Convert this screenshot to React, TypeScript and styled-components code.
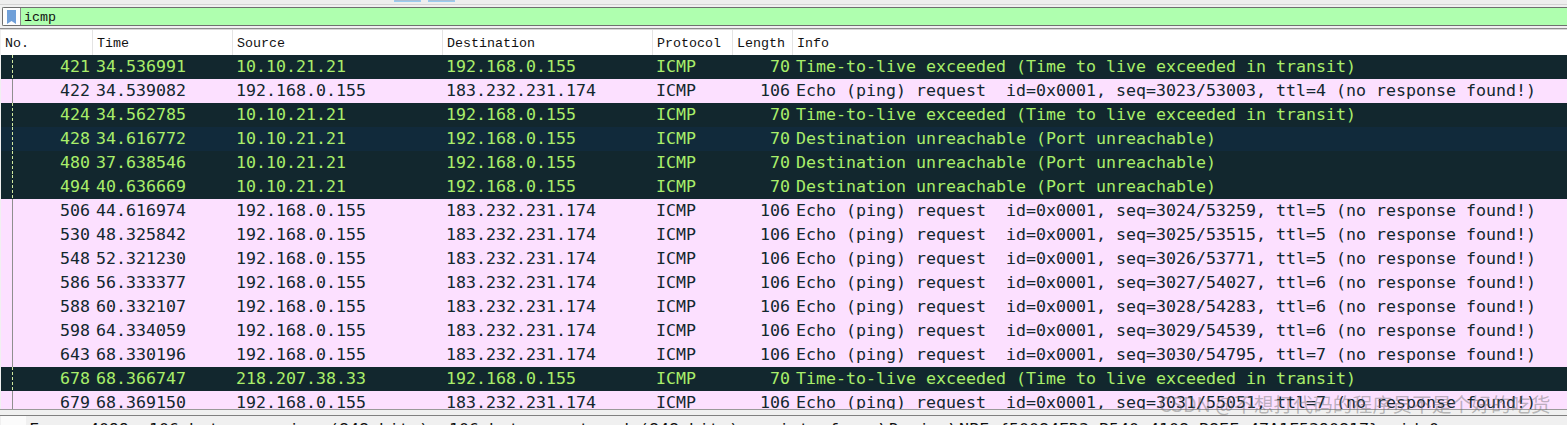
import React from "react";
import styled, { createGlobalStyle } from "styled-components";

const Global = createGlobalStyle`
  html, body { margin: 0; padding: 0; background: #f0f0f0; overflow: hidden; }
  #root { width: 1567px; height: 425px; overflow: hidden; }
`;

const mono = `"Liberation Mono", monospace`;
const rowFont = `"DejaVu Sans Mono", monospace`;
const grid = `93px 140px 210px 210px 80px 60px 1fr`;

const Page = styled.div`
  position: relative;
  width: 1567px;
  height: 425px;
  overflow: hidden;
  background: #f0f0f0;
  display: flex;
  flex-direction: column;
`;

const TopStrip = styled.div`
  height: 7px;
  box-sizing: border-box;
  padding-left: 394px;
  display: flex;
  align-items: flex-start;
  gap: 7px;
  background: linear-gradient(#eeeeee 0 4px, #d4d4d4 4px 5px, #f0f0f0 5px);
`;

const TabMark = styled.div`
  width: 27px;
  height: 2px;
  box-sizing: border-box;
  background: #a9bfd6;
  border: 1px solid #99ccf0;
  border-top: 0;
`;

const FilterBar = styled.div`
  height: 19px;
  margin-left: 2px;
  box-sizing: border-box;
  border: 1px solid #6f6f6f;
  border-right: 0;
  border-radius: 2px 0 0 2px;
  display: flex;
  background: #afffaf;
`;

const BookmarkBox = styled.div`
  width: 17px;
  background: #fdfdfd;
  border-right: 1px solid #8a8a8a;
  display: flex;
  align-items: center;
  justify-content: center;
`;

const FilterText = styled.div`
  font: 13.33px/19px ${mono};
  color: #111;
  padding-left: 3px;
`;

const Divider = styled.div`
  height: 2px;
  margin-top: 2px;
  background: linear-gradient(#8e8e8e 0 1px, #d8d8d8 1px);
  flex: none;
`;

const Table = styled.div`
  margin-left: 1px;
  height: 379px;
  flex: none;
  overflow: hidden;
  display: flex;
  flex-direction: column;
`;

const HeaderRow = styled.div`
  height: 25px;
  flex: none;
  margin-left: -1px;
  display: grid;
  grid-template-columns: ${grid};
  background: #ffffff;
`;

const HeaderCell = styled.div`
  font: 13.33px/28px ${mono};
  color: #111;
  height: 25px;
  padding-left: 4px;
  border-right: 1px solid #e4e4e4;
  box-sizing: border-box;
  &:first-child { padding-left: 5px; }
  &:last-child { border-right: 0; }
`;

const Row = styled.div<{ $kind: "err" | "sel" | "ok" }>`
  position: relative;
  height: 24px;
  flex: none;
  margin-left: -1px;
  padding-left: 1px;
  display: grid;
  grid-template-columns: 92px 140px 210px 210px 80px 60px 1fr;
  font: 16.62px/24px ${rowFont};
  white-space: pre;
  background: ${(p) => (p.$kind === "ok" ? "#fce0ff" : p.$kind === "sel" ? "#112a3b" : "#12272e")};
  color: ${(p) => (p.$kind === "ok" ? "#12272e" : "#a9ee6a")};
`;

const EdgeLine = styled.i`
  position: absolute;
  left: 0;
  top: 0;
  bottom: 0;
  width: 1px;
  background: #9a9a9a;
`;

const Relation = styled.i<{ $dashed: boolean }>`
  position: absolute;
  left: 12px;
  top: 0;
  bottom: 0;
  width: 1px;
  background: ${(p) =>
    p.$dashed
      ? "repeating-linear-gradient(#cfe8a0 0 3px, transparent 3px 5px)"
      : "#8f8f8f"};
`;

const Right = styled.div`
  text-align: right;
  padding-right: 3px;
`;

const Left = styled.div`
  padding-left: 3px;
`;

const Info = styled.div`
  padding-left: 3px;
`;

const BottomGap = styled.div`
  height: 6px;
  flex: none;
  border-top: 1px solid #9a9a9a;
  box-sizing: border-box;
`;

const DetailPane = styled.div`
  flex: 1;
  border-top: 1px solid #808080;
  display: flex;
  overflow: hidden;
`;

const Gutter = styled.div`
  width: 25px;
  margin-left: 1px;
  background: #fbfbfb;
  flex: none;
`;

const DetailText = styled.div`
  padding-left: 3px;
  font: 16.62px/24px ${rowFont};
  color: #111;
  white-space: pre;
  margin-top: 2px;
`;

const Watermark = styled.div`
  position: absolute;
  left: 1159px;
  top: 392px;
  font: 19.8px/24px "Noto Sans CJK SC", "Liberation Sans", sans-serif;
  color: rgba(110, 110, 110, 0.45);
  white-space: nowrap;
`;

type R = [string, string, string, string, string, string, string, "err" | "sel" | "ok"];
const TTL = "Time-to-live exceeded (Time to live exceeded in transit)";
const PORT = "Destination unreachable (Port unreachable)";
const echo = (s: string, t: number) =>
  `Echo (ping) request  id=0x0001, seq=${s}, ttl=${t} (no response found!)`;
const A = "192.168.0.155";
const B = "183.232.231.174";
const rows: R[] = [
  ["421", "34.536991", "10.10.21.21", A, "ICMP", "70", TTL, "err"],
  ["422", "34.539082", A, B, "ICMP", "106", echo("3023/53003", 4), "ok"],
  ["424", "34.562785", "10.10.21.21", A, "ICMP", "70", TTL, "err"],
  ["428", "34.616772", "10.10.21.21", A, "ICMP", "70", PORT, "sel"],
  ["480", "37.638546", "10.10.21.21", A, "ICMP", "70", PORT, "err"],
  ["494", "40.636669", "10.10.21.21", A, "ICMP", "70", PORT, "err"],
  ["506", "44.616974", A, B, "ICMP", "106", echo("3024/53259", 5), "ok"],
  ["530", "48.325842", A, B, "ICMP", "106", echo("3025/53515", 5), "ok"],
  ["548", "52.321230", A, B, "ICMP", "106", echo("3026/53771", 5), "ok"],
  ["586", "56.333377", A, B, "ICMP", "106", echo("3027/54027", 6), "ok"],
  ["588", "60.332107", A, B, "ICMP", "106", echo("3028/54283", 6), "ok"],
  ["598", "64.334059", A, B, "ICMP", "106", echo("3029/54539", 6), "ok"],
  ["643", "68.330196", A, B, "ICMP", "106", echo("3030/54795", 7), "ok"],
  ["678", "68.366747", "218.207.38.33", A, "ICMP", "70", TTL, "err"],
  ["679", "68.369150", A, B, "ICMP", "106", echo("3031/55051", 7), "ok"],
];

const headers = ["No.", "Time", "Source", "Destination", "Protocol", "Length", "Info"];

export default function App() {
  return (
    <Page>
      <Global />
      <TopStrip>
        <TabMark />
        <TabMark />
      </TopStrip>
      <FilterBar>
        <BookmarkBox>
          <svg width="9" height="14" viewBox="0 0 9 14">
            <path d="M0 0H9V14L4.5 11L0 14Z" fill="#6f9fd8" />
          </svg>
        </BookmarkBox>
        <FilterText>icmp</FilterText>
      </FilterBar>
      <Divider />
      <Table>
        <HeaderRow>
          {headers.map((h) => (
            <HeaderCell key={h}>{h}</HeaderCell>
          ))}
        </HeaderRow>
        {rows.map((r) => (
          <Row key={r[0]} $kind={r[7]}>
            <EdgeLine />
            <Relation $dashed={r[7] !== "ok"} />
            <Right>{r[0]}</Right>
            <Left>{r[1]}</Left>
            <Left>{r[2]}</Left>
            <Left>{r[3]}</Left>
            <Left>{r[4]}</Left>
            <Right>{r[5]}</Right>
            <Info>{r[6]}</Info>
          </Row>
        ))}
      </Table>
      <BottomGap />
      <DetailPane>
        <Gutter />
        <DetailText>{"Frame 4099: 106 bytes on wire (848 bits), 106 bytes captured (848 bits) on interface \\Device\\NPF_{50084ED3-B540-4108-B8EF-47A1F5390817}, id 0"}</DetailText>
      </DetailPane>
      <Watermark>CSDN @不想打代码的程序员不是个好的吃货</Watermark>
    </Page>
  );
}
